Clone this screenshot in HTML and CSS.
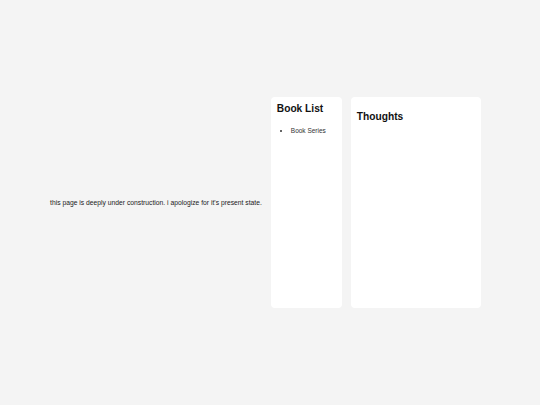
FILE: index.html
```html
<!DOCTYPE html>
<html>
<head>
<meta charset="utf-8">
<link rel="stylesheet" href="styles.css">
</head>
<body>
<div class="page">
  <p class="notice">this page is deeply under construction. i apologize for it's present state.</p>
  <div class="card books">
    <h1 class="title">Book List</h1>
    <ul class="list">
      <li>Book Series</li>
    </ul>
  </div>
  <div class="card thoughts">
    <h1 class="title title-thoughts">Thoughts</h1>
  </div>
</div>
</body>
</html>
```
FILE: styles.css
```css
html, body {
  margin: 0;
  padding: 0;
  background: #f4f4f4;
  font-family: "Liberation Sans", Arial, sans-serif;
  color: #111;
}
.page {
  height: 405px;
  display: flex;
  align-items: center;
  padding-left: 50px;
  box-sizing: border-box;
}
.notice {
  margin: 0 9px 0 0;
  font-size: 6.75px;
  white-space: nowrap;
  color: #1a1a1a;
}
.card {
  background: #fff;
  border-radius: 4px;
  height: 211px;
  box-sizing: border-box;
  padding: 6px;
}
.books {
  width: 71px;
  margin-right: 9px;
}
.thoughts {
  width: 130px;
}
.title {
  margin: 0;
  font-size: 10.2px;
  font-weight: bold;
  line-height: 12px;
  color: #111;
}
.title-thoughts {
  margin-top: 8px;
}
.list {
  margin: 12px 0 0 0;
  padding-left: 14px;
  font-size: 6.5px;
  color: #333;
}
```
